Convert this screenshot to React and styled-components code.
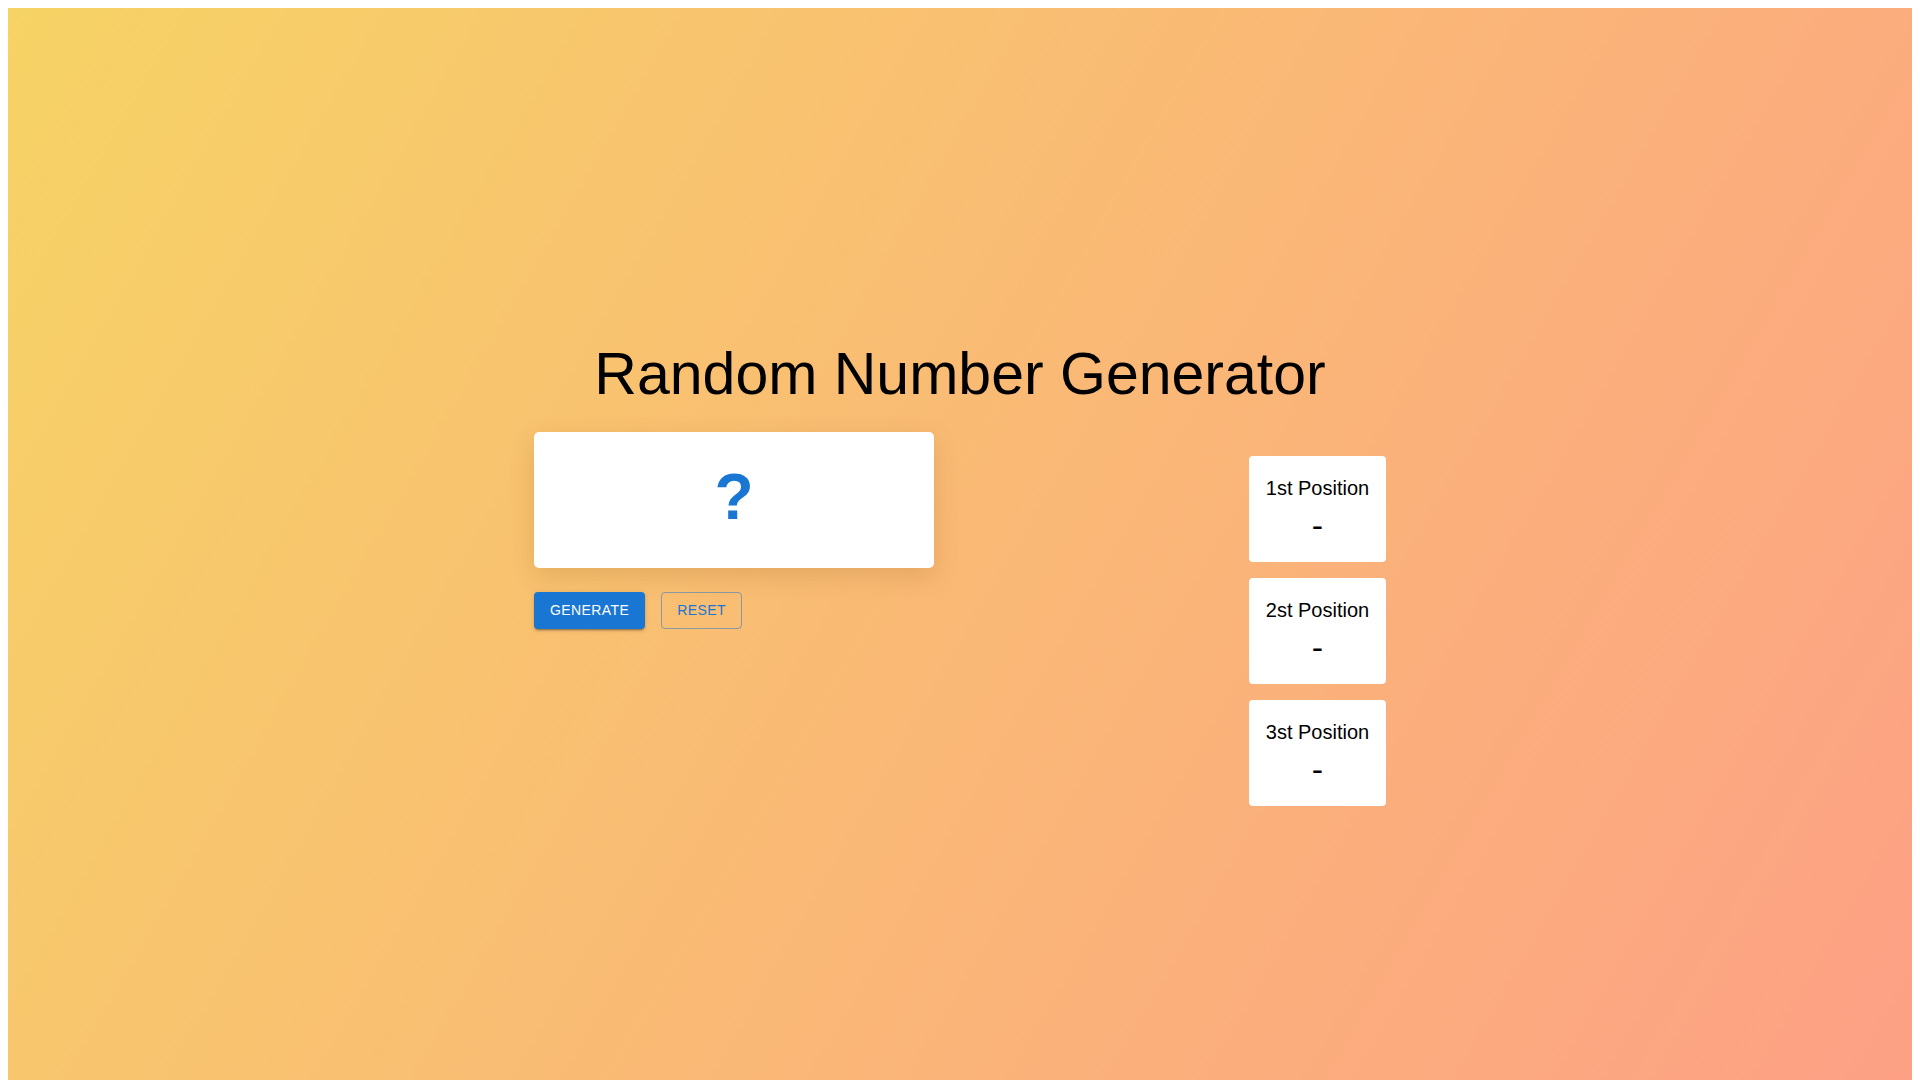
import React from 'react'
import styled, { createGlobalStyle } from 'styled-components'

// Constants
const primary = '#1976d2'
const positions = ['1st Position', '2st Position', '3st Position']

const GlobalStyle = createGlobalStyle`
    body {
        margin: 8px;
        background: #ffffff;
        font-family: 'Liberation Sans', Arial, sans-serif;
    }
`

// Styled components
const Page = styled.div`
    min-height: 100vh;
    background: linear-gradient(120deg, #f6d365 0%, #fda085 100%);
    padding-top: 332px;
    box-sizing: border-box;
`
const Title = styled.h2`
    margin: 0 0 24px;
    text-align: center;
    font-family: 'Liberation Sans', Arial, sans-serif;
    font-size: 59px;
    font-weight: 400;
    line-height: normal;
    color: #000000;
`
const Content = styled.div`
    width: 852px;
    margin: 0 auto;
    display: flex;
    flex-direction: row;
    justify-content: space-between;
    align-items: flex-start;
`
const LeftColumn = styled.div`
    display: flex;
    flex-direction: column;
`
const NumberCard = styled.div`
    width: 400px;
    height: 136px;
    box-sizing: border-box;
    padding-bottom: 6px;
    background: #ffffff;
    border-radius: 5px;
    box-shadow: 0 8px 26px rgba(120, 60, 0, 0.16);
    display: flex;
    align-items: center;
    justify-content: center;
`
const QuestionMark = styled.span`
    font-family: 'Liberation Sans', Arial, sans-serif;
    font-size: 64px;
    font-weight: 700;
    color: ${primary};
`
const ButtonRow = styled.div`
    display: flex;
    flex-direction: row;
    gap: 16px;
    margin-top: 24px;
`
const Button = styled.button`
    font-family: 'Liberation Sans', Arial, sans-serif;
    font-size: 14px;
    font-weight: 400;
    line-height: 1.75;
    letter-spacing: 0.4px;
    text-transform: uppercase;
    min-width: 64px;
    border-radius: 4px;
    cursor: pointer;
    padding: ${(props) => (props.outlined ? '5px 15px' : '6px 16px')};
    color: ${(props) => (props.outlined ? primary : '#ffffff')};
    background: ${(props) => (props.outlined ? 'transparent' : primary)};
    border: ${(props) => (props.outlined ? '1px solid rgba(25, 118, 210, 0.5)' : 'none')};
    box-shadow: ${(props) =>
        props.outlined
            ? 'none'
            : '0px 3px 1px -2px rgba(0,0,0,0.2), 0px 2px 2px 0px rgba(0,0,0,0.14), 0px 1px 5px 0px rgba(0,0,0,0.12)'};
`
const RightColumn = styled.div`
    display: flex;
    flex-direction: column;
    gap: 16px;
    margin-top: 24px;
`
const PositionCard = styled.div`
    width: 137px;
    box-sizing: border-box;
    padding: 16px 0;
    background: #ffffff;
    border-radius: 4px;
    display: flex;
    flex-direction: column;
    align-items: center;
    color: #000000;
`
const PositionLabel = styled.span`
    font-size: 20px;
    line-height: 32px;
`
const PositionValue = styled.span`
    font-size: 34px;
    line-height: 42px;
`

const App = () => {
    return (
        <Page>
            <GlobalStyle />
            <Title>Random Number Generator</Title>
            <Content>
                <LeftColumn>
                    <NumberCard>
                        <QuestionMark>?</QuestionMark>
                    </NumberCard>
                    <ButtonRow>
                        <Button>Generate</Button>
                        <Button outlined>Reset</Button>
                    </ButtonRow>
                </LeftColumn>
                <RightColumn>
                    {positions.map((label) => (
                        <PositionCard key={label}>
                            <PositionLabel>{label}</PositionLabel>
                            <PositionValue>-</PositionValue>
                        </PositionCard>
                    ))}
                </RightColumn>
            </Content>
        </Page>
    )
}

export default App
